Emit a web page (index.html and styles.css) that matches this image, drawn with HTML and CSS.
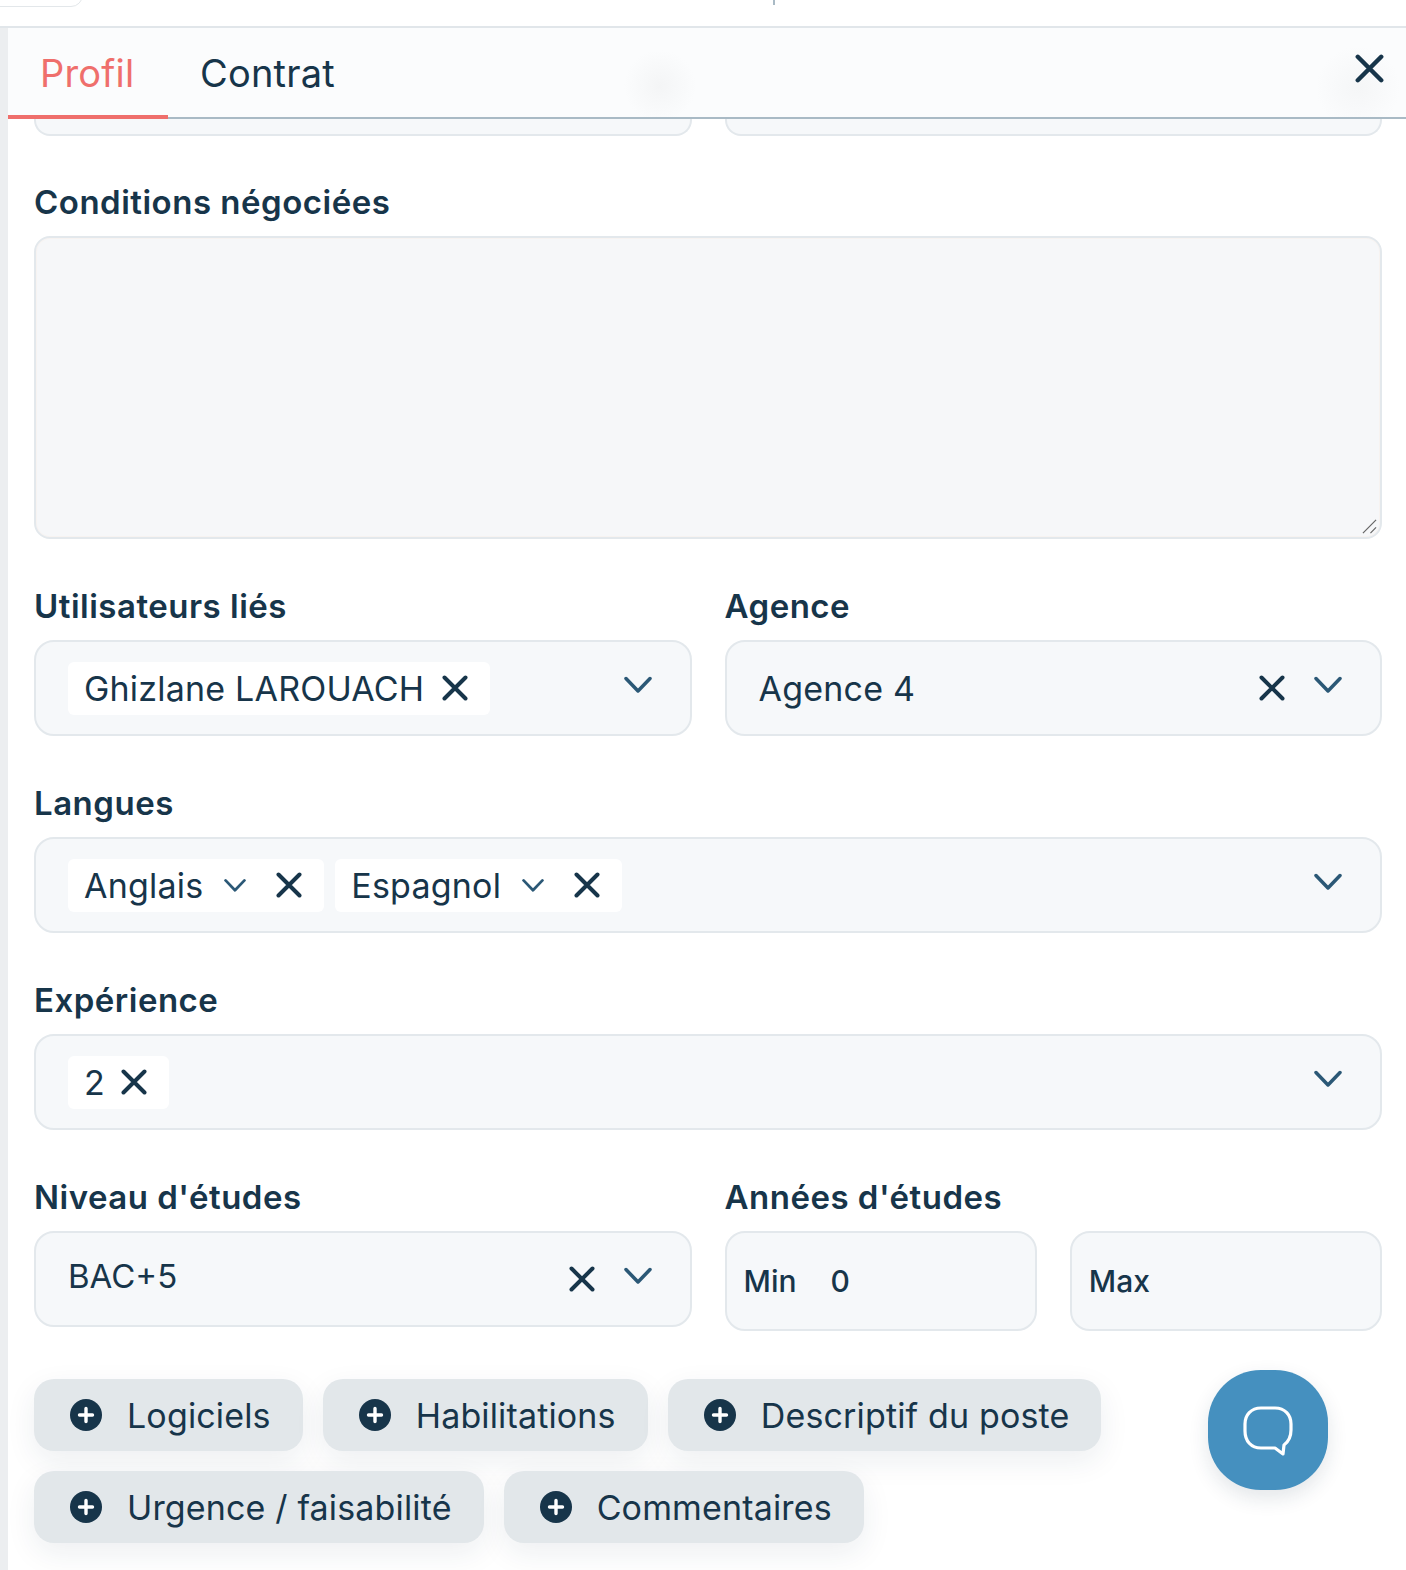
FILE: index.html
```html
<!DOCTYPE html>
<html lang="fr">
<head>
<meta charset="UTF-8">
<meta name="viewport" content="width=device-width, initial-scale=1.0">
<title>Profil</title>
<link rel="stylesheet" href="styles.css">
</head>
<body>
<svg class="icon-defs" width="0" height="0">
    <symbol id="i-x" viewBox="0 0 26 26"><path d="M2.500 2.500 23.500 23.500M23.500 2.500 2.500 23.500" fill="none" stroke="currentColor" stroke-width="4" stroke-linecap="round"/></symbol>
    <symbol id="i-chev" viewBox="0 0 28 18"><path d="M2 2.500 14 15 26 2.500" fill="none" stroke="currentColor" stroke-width="3.500" stroke-linecap="round" stroke-linejoin="round"/></symbol>
    <symbol id="i-plus" viewBox="0 0 32 32"><circle cx="16" cy="16" r="16" fill="currentColor"/><path d="M16 9.500v13M9.500 16h13" stroke="#fff" stroke-width="3.400" stroke-linecap="round"/></symbol>
</svg>
<div class="topbar">
    <div class="top-stub"></div>
    <div class="top-tick"></div>
</div>
<div class="page">
    <div class="side-strip"></div>
    <div class="panel">
        <div class="tabs">
            <div class="tab active">Profil</div>
            <div class="tab">Contrat</div>
            <svg class="tabs-close"><use href="#i-x"/></svg>
        </div>
        <div class="panel-body">
            <div class="row peek-row">
                <div class="peek"></div>
                <div class="peek"></div>
            </div>
            <div class="group group-first">
                <div class="label">Conditions négociées</div>
                <div class="textarea">
                    <svg class="grip" viewBox="0 0 16 16"><path d="M1 15 15 1M9 15 15 9" fill="none" stroke="#666" stroke-width="1.300"/></svg>
                </div>
            </div>
            <div class="row">
                <div class="group">
                    <div class="label">Utilisateurs liés</div>
                    <div class="field">
                        <span class="chip">Ghizlane LAROUACH<svg class="x x-chip"><use href="#i-x"/></svg></span>
                        <svg class="chev"><use href="#i-chev"/></svg>
                    </div>
                </div>
                <div class="group">
                    <div class="label">Agence</div>
                    <div class="field">
                        <span class="value">Agence 4</span>
                        <svg class="x x-clear"><use href="#i-x"/></svg>
                        <svg class="chev"><use href="#i-chev"/></svg>
                    </div>
                </div>
            </div>
            <div class="group">
                <div class="label">Langues</div>
                <div class="field">
                    <span class="chip">Anglais<svg class="chev-small"><use href="#i-chev"/></svg><svg class="x x-lang"><use href="#i-x"/></svg></span>
                    <span class="chip">Espagnol<svg class="chev-small"><use href="#i-chev"/></svg><svg class="x x-lang"><use href="#i-x"/></svg></span>
                    <svg class="chev"><use href="#i-chev"/></svg>
                </div>
            </div>
            <div class="group">
                <div class="label">Expérience</div>
                <div class="field">
                    <span class="chip">2<svg class="x x-chip x-near"><use href="#i-x"/></svg></span>
                    <svg class="chev"><use href="#i-chev"/></svg>
                </div>
            </div>
            <div class="row">
                <div class="group">
                    <div class="label">Niveau d'études</div>
                    <div class="field field-flat">
                        <span class="value value-up">BAC+5</span>
                        <svg class="x x-clear"><use href="#i-x"/></svg>
                        <svg class="chev"><use href="#i-chev"/></svg>
                    </div>
                </div>
                <div class="group">
                    <div class="label">Années d'études</div>
                    <div class="minmax">
                        <div class="num"><span class="num-label">Min</span><span class="num-value">0</span></div>
                        <div class="num"><span class="num-label">Max</span></div>
                    </div>
                </div>
            </div>
            <div class="actions">
                <button class="add-btn"><svg class="plus"><use href="#i-plus"/></svg>Logiciels</button>
                <button class="add-btn"><svg class="plus"><use href="#i-plus"/></svg>Habilitations</button>
                <button class="add-btn"><svg class="plus"><use href="#i-plus"/></svg>Descriptif du poste</button>
                <button class="add-btn"><svg class="plus"><use href="#i-plus"/></svg>Urgence / faisabilité</button>
                <button class="add-btn"><svg class="plus"><use href="#i-plus"/></svg>Commentaires</button>
            </div>
        </div>
    </div>
</div>
<button class="chat-fab">
    <svg viewBox="0 0 52 52" width="52" height="52"><path d="M19 4h14c10 0 16 7 16 16v6c0 7-3 12-7 15l-1 9-8-6H19C9 44 3 37 3 27v-7C3 11 9 4 19 4Z" fill="none" stroke="#fff" stroke-width="3.200" stroke-linejoin="round"/></svg>
</button>
</body>
</html>
```

FILE: styles.css
```css
* {
    box-sizing: border-box;
}
body {
    margin: 0;
    background-color: #fff;
    color: #17354a;
    font-family: Inter, "Liberation Sans", sans-serif;
    position: relative;
    height: 1570px;
    overflow: hidden;
}
.icon-defs {
    position: absolute;
}
.topbar {
    position: relative;
    height: 28px;
    border-bottom: 2px solid #e1e6ea;
}
.top-stub {
    position: absolute;
    left: -20px;
    top: -20px;
    width: 103px;
    height: 27px;
    border: 1px solid #e3e7ea;
    border-radius: 12px;
}
.top-tick {
    position: absolute;
    left: 773px;
    top: 0;
    width: 2px;
    height: 5px;
    background-color: #a9bac5;
}
.page {
    display: flex;
    min-height: 1542px;
}
.side-strip {
    width: 8px;
    background-color: #eceef0;
}
.panel {
    flex: 1;
    min-width: 0;
}
.tabs {
    position: relative;
    display: flex;
    height: 91px;
    border-bottom: 2px solid #a9bac5;
    background-color: #fbfcfd;
    background-image:
        radial-gradient(circle at 652px 58px, #f4f5f6 0, rgba(251,252,253,0) 36px),
        radial-gradient(circle at 1350px 60px, #f5f6f7 0, rgba(251,252,253,0) 42px);
}
.tab {
    height: 91px;
    padding: 20px 32px 0;
    font-size: 38px;
    line-height: 50px;
    letter-spacing: 0.2px;
    color: #17354a;
}
.tab.active {
    width: 160px;
    color: #ef6f6c;
    border-bottom: 4px solid #ef6f6c;
}
.tabs-close {
    position: absolute;
    right: 22px;
    top: 26px;
    width: 29px;
    height: 29px;
    color: #17354a;
}
.panel-body {
    padding: 0 24px 0 26px;
}
.row {
    display: flex;
    gap: 33px;
}
.row .group {
    flex: 1;
    min-width: 0;
}
.peek-row {
    height: 17px;
}
.peek {
    flex: 1;
    background-color: #f6f8fa;
    border: 2px solid #e3e8ec;
    border-top: none;
    border-radius: 0 0 16px 16px;
}
.group {
    padding-top: 45px;
}
.group-first {
    padding-top: 44px;
}
.label {
    height: 56px;
    font-size: 33px;
    font-weight: 600;
    line-height: 44px;
    letter-spacing: 0.5px;
    color: #17354a;
}
.textarea {
    position: relative;
    height: 303px;
    background-color: #f6f7f9;
    border: 2px solid #e3e8ec;
    border-radius: 16px;
    box-shadow: inset 0 0 0 1px #f7f3f1;
}
.grip {
    position: absolute;
    right: 3px;
    bottom: 3px;
    width: 15px;
    height: 15px;
}
.field {
    display: flex;
    align-items: center;
    gap: 11px;
    height: 96px;
    padding: 0 38px 0 32px;
    background-color: #f6f8fa;
    border: 2px solid #e3e8ec;
    border-radius: 20px;
    font-size: 34px;
    letter-spacing: 0.2px;
}
.chip {
    display: flex;
    align-items: center;
    height: 53px;
    padding: 0 22px 0 16px;
    background-color: #fff;
    border-radius: 6px;
    white-space: nowrap;
}
.value {
    flex: 1;
}
.value-up {
    margin-top: -6px;
    font-size: 33px;
    letter-spacing: 0;
}
.chev {
    flex: none;
    width: 28px;
    height: 18px;
    margin-left: auto;
    margin-top: -6px;
    color: #2b5876;
}
.x {
    flex: none;
    width: 26px;
    height: 26px;
    color: #17354a;
}
.x-chip {
    margin-left: 18px;
}
.x-near {
    margin-left: 16px;
}
.x-clear {
    margin-right: 18px;
}
.x-lang {
    margin-left: 30px;
}
.chev-small {
    width: 22px;
    height: 15px;
    margin-left: 21px;
    color: #2b5876;
}
.minmax {
    display: flex;
    gap: 33px;
}
.num {
    flex: 1;
    display: flex;
    align-items: center;
    height: 100px;
    padding-left: 17px;
    background-color: #f6f8fa;
    border: 2px solid #e3e8ec;
    border-radius: 20px;
    font-size: 30px;
    font-weight: 500;
}
.num-label {
    width: 87px;
}
.field-flat {
    margin-bottom: 4px;
}
.actions {
    display: flex;
    flex-wrap: wrap;
    gap: 20px;
    width: 1080px;
    margin-top: 48px;
}
.add-btn {
    display: flex;
    align-items: center;
    height: 72px;
    padding: 0 32px 0 36px;
    border: none;
    border-radius: 20px;
    background-color: #e2e7ea;
    box-shadow: 0 10px 30px rgba(23,53,74,0.08);
    color: #17354a;
    font-family: inherit;
    font-size: 34px;
    letter-spacing: 0.15px;
}
.plus {
    flex: none;
    width: 32px;
    height: 32px;
    margin-right: 25px;
    color: #17354a;
}
.chat-fab {
    position: absolute;
    left: 1208px;
    top: 1370px;
    display: flex;
    align-items: center;
    justify-content: center;
    width: 120px;
    height: 120px;
    padding: 0;
    border: none;
    border-radius: 44%;
    background-color: #4590bf;
    box-shadow: 0 8px 20px rgba(23,53,74,0.12);
}
```
